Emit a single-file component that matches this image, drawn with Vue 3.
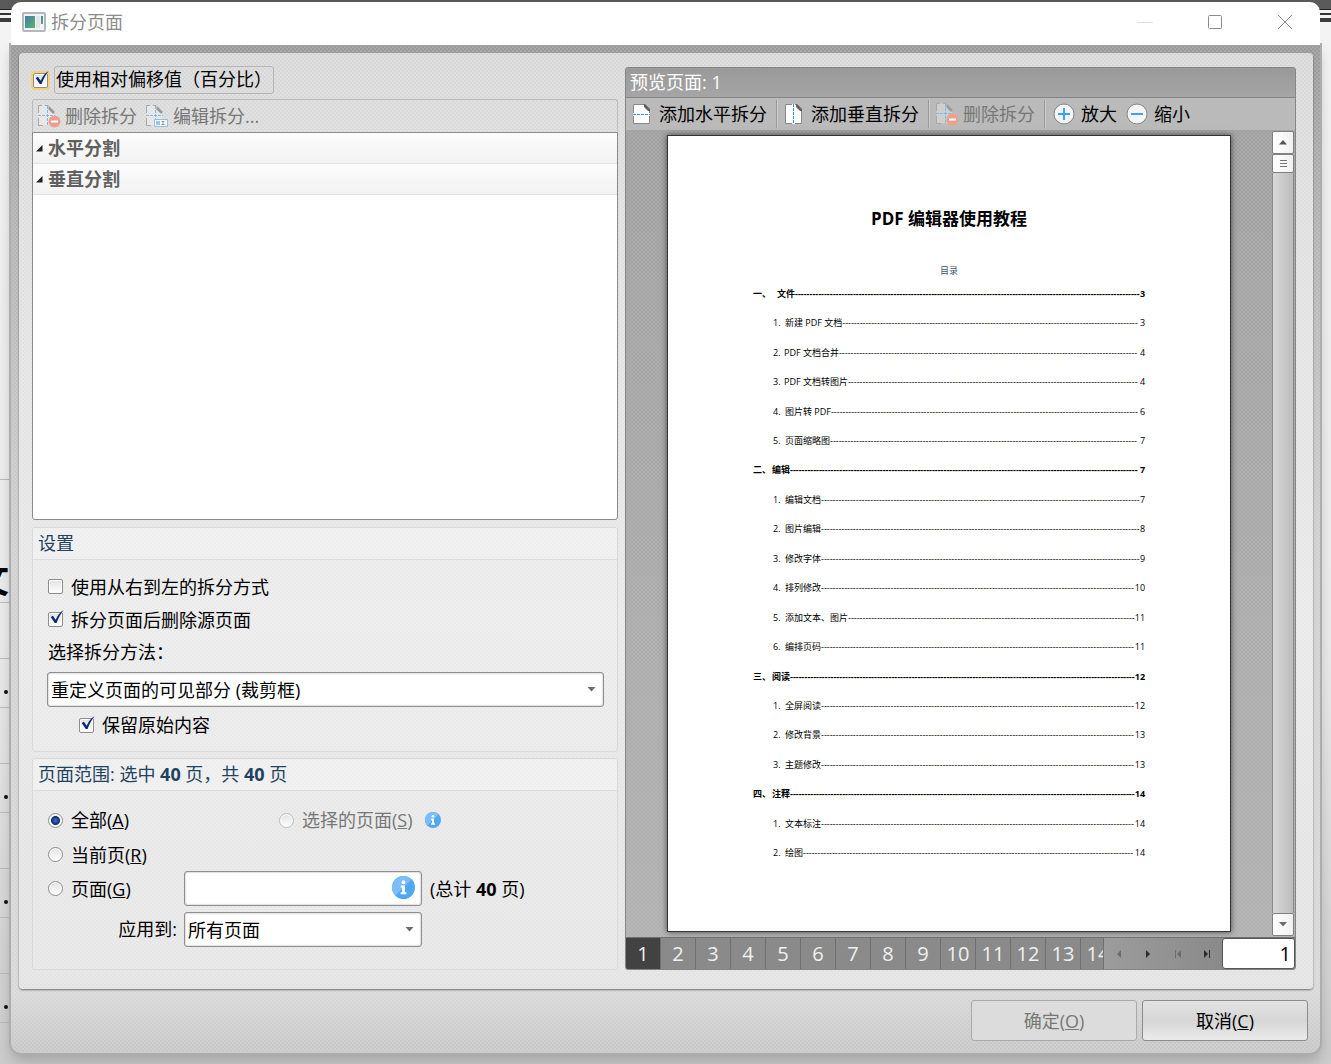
<script setup>
import { ref } from 'vue'

const relative = ref(true)
const rtl = ref(false)
const removeSource = ref(true)
const keepContent = ref(true)
const range = ref('all')
const current = ref(1)
const tabs = Array.from({ length: 14 }, (_, i) => i + 1)
// d: number of hyphens in the leader between entry and page number
const toc = [
  { n: '一、', t: '文件', p: 3, d: 119, head: true, wide: true },
  { n: '1.', t: '新建 PDF 文档', p: 3, d: 102 },
  { n: '2.', t: 'PDF 文档合并', p: 4, d: 103, near: true },
  { n: '3.', t: 'PDF 文档转图片', p: 4, d: 100, near: true },
  { n: '4.', t: '图片转 PDF', p: 6, d: 106 },
  { n: '5.', t: '页面缩略图', p: 7, d: 106 },
  { n: '二、', t: '编辑', p: 7, d: 120, head: true },
  { n: '1.', t: '编辑文档', p: 7, d: 110 },
  { n: '2.', t: '图片编辑', p: 8, d: 110 },
  { n: '3.', t: '修改字体', p: 9, d: 110 },
  { n: '4.', t: '排列修改', p: 10, d: 108 },
  { n: '5.', t: '添加文本、图片', p: 11, d: 99 },
  { n: '6.', t: '编排页码', p: 11, d: 108 },
  { n: '三、', t: '阅读', p: 12, d: 119, head: true },
  { n: '1.', t: '全屏阅读', p: 12, d: 108 },
  { n: '2.', t: '修改背景', p: 13, d: 108 },
  { n: '3.', t: '主题修改', p: 13, d: 108 },
  { n: '四、', t: '注释', p: 14, d: 119, head: true },
  { n: '1.', t: '文本标注', p: 14, d: 108 },
  { n: '2.', t: '绘图', p: 14, d: 114 }
]
</script>

<template>
  <div class="desktop">
    <svg class="symbols" aria-hidden="true">
      <defs>
        <linearGradient id="g-app" x1="0" y1="0" x2="1" y2="1">
          <stop offset="0" stop-color="#3e7fae" /><stop offset="1" stop-color="#5fb16c" />
        </linearGradient>
        <symbol id="i-split-dim" viewBox="0 0 24 24">
          <path d="M1.500 1.500h10l6 6v14h-16z" fill="#fff" fill-opacity=".3" />
          <path d="M5 1.500H1.500V9M1.500 14V21.500H6M8 1.500h3" fill="none" stroke="#a8a8a8" />
          <path d="M11.500 1.500l6 6v2h-2l-4-4z" fill="#999" />
          <path d="M1 11.500h17M10.500 2v20" fill="none" stroke="#7fb8e2" stroke-dasharray="3 1" />
        </symbol>
        <symbol id="i-delete" viewBox="0 0 24 24">
          <use href="#i-split-dim" />
          <circle cx="17.500" cy="17.500" r="6" fill="#eba08d" />
          <path d="M14 17.500h7" stroke="#fff" stroke-width="2" />
        </symbol>
        <symbol id="i-edit" viewBox="0 0 24 24">
          <use href="#i-split-dim" />
          <path d="M9.500 15.500h13v7h-13z" fill="#f4f8fb" stroke="#8fbfe2" />
          <path d="M11 17h4v4h-4z" fill="#9ac7e8" />
          <path d="M16.500 17.500h3M18 17.500v3M16.500 20.500h3" stroke="#999" fill="none" />
        </symbol>
        <symbol id="i-sheet" viewBox="0 0 24 24">
          <path d="M2.500 2.500h11l5 5v14h-16z" fill="#fff" stroke="#888" />
          <path d="M13 2h1l5 5v2h-2l-4-4z" fill="#606060" />
        </symbol>
        <symbol id="i-info" viewBox="0 0 24 24">
          <circle cx="12" cy="12" r="12" fill="#4fa9f2" />
          <path d="M3.500 20.500A12 12 0 0 1 20.500 3.500z" fill="#7cbdf7" />
          <circle cx="12" cy="6.500" r="2" fill="#fff" />
          <path d="M9 10h4.500v7h1.500v2H9v-2h1.500v-5H9z" fill="#fff" />
        </symbol>
        <symbol id="i-check" viewBox="0 0 20 20">
          <path d="M3 9l2.500-1.500 3 4.500C10.500 7 13.500 3.500 17.500 1c-3.500 4-5.500 8-8 14.500H7.500z" fill="#0b2a73" />
        </symbol>
        <symbol id="i-arrow" viewBox="0 0 8 5">
          <path d="M0 0h8l-4 4.500z" fill="#6c6c6c" />
        </symbol>
      </defs>
    </svg>

    <div class="behind" aria-hidden="true">
      <div class="cell c1"></div>
      <div class="cell c2">文</div>
      <div class="cell c3"></div>
      <template v-for="i in 4" :key="i">
        <div class="cell c4"><i></i></div>
        <div class="cell c3"></div>
      </template>
    </div>

    <main class="dialog">
      <header class="titlebar">
        <svg class="appicon" viewBox="0 0 24 20">
          <rect x="1" y="1" width="22" height="18" rx="1" fill="#f1f3f5" stroke="#b2b8bd" stroke-width="2" />
          <rect x="3" y="4" width="10" height="12" fill="url(#g-app)" />
          <rect x="14" y="4" width="4" height="12" fill="#e2e4e6" />
          <rect x="19" y="4" width="2" height="8" fill="url(#g-app)" />
        </svg>
        <h1>拆分页面</h1>
        <button class="winbtn" aria-label="最小化"><svg viewBox="0 0 16 16"><path d="M0 8.500h16" stroke="#ddd" /></svg></button>
        <button class="winbtn" aria-label="最大化"><svg viewBox="0 0 16 16"><rect x="1.500" y="1.500" width="13" height="13" rx="1" fill="none" stroke="#8c8c8c" /></svg></button>
        <button class="winbtn" aria-label="关闭"><svg viewBox="0 0 16 16"><path d="M1 1l14 14M15 1L1 15" stroke="#8c8c8c" /></svg></button>
      </header>

      <div class="body">
        <div class="panel">
          <section class="left">
            <label class="check focus">
              <span class="box"><input v-model="relative" type="checkbox"><svg v-if="relative"><use href="#i-check" /></svg></span>
              <span class="focus-text">使用相对偏移值（百分比）</span>
            </label>
            <div class="tools left-tools">
              <button class="tool" disabled><svg><use href="#i-delete" /></svg>删除拆分</button>
              <button class="tool" disabled><svg><use href="#i-edit" /></svg>编辑拆分...</button>
            </div>
            <div class="tree">
              <button class="node"><svg viewBox="0 0 7 7"><path d="M6.500 0v6.500H0z" fill="#222" /></svg>水平分割</button>
              <button class="node"><svg viewBox="0 0 7 7"><path d="M6.500 0v6.500H0z" fill="#222" /></svg>垂直分割</button>
            </div>

            <section class="group">
              <h2>设置</h2>
              <div class="settings">
                <label class="check"><span class="box"><input v-model="rtl" type="checkbox"><svg v-if="rtl"><use href="#i-check" /></svg></span>使用从右到左的拆分方式</label>
                <label class="check"><span class="box"><input v-model="removeSource" type="checkbox"><svg v-if="removeSource"><use href="#i-check" /></svg></span>拆分页面后删除源页面</label>
                <label class="caption" for="method">选择拆分方法：</label>
                <div class="select">
                  <select id="method"><option>重定义页面的可见部分 (裁剪框)</option></select>
                  <svg><use href="#i-arrow" /></svg>
                </div>
                <label class="check nested"><span class="box"><input v-model="keepContent" type="checkbox"><svg v-if="keepContent"><use href="#i-check" /></svg></span>保留原始内容</label>
              </div>
            </section>

            <section class="group last">
              <h2>页面范围: 选中 <b>40</b> 页，共 <b>40</b> 页</h2>
              <div class="range">
                <label class="check"><input v-model="range" type="radio" name="range" value="all"><span>全部(<u>A</u>)</span></label>
                <div class="selected">
                  <label class="check off"><input v-model="range" type="radio" name="range" value="sel" disabled><span>选择的页面(<u>S</u>)</span></label>
                  <svg class="info"><use href="#i-info" /></svg>
                </div>
                <label class="check cur"><input v-model="range" type="radio" name="range" value="cur"><span>当前页(<u>R</u>)</span></label>
                <label class="check"><input v-model="range" type="radio" name="range" value="pages"><span>页面(<u>G</u>)</span></label>
                <div class="line">
                  <div class="field"><input type="text" aria-label="页面"><svg><use href="#i-info" /></svg></div>
                  <span>(总计 <b>40</b> 页)</span>
                </div>
                <label class="apply" for="apply">应用到:</label>
                <div class="line bottom">
                  <div class="select narrow">
                    <select id="apply"><option>所有页面</option></select>
                    <svg><use href="#i-arrow" /></svg>
                  </div>
                </div>
              </div>
            </section>
          </section>

          <section class="preview">
            <h2>预览页面: 1</h2>
            <div class="tools">
              <button class="tool"><svg viewBox="0 0 24 24"><use href="#i-sheet" /><rect x="2" y="11" width="17" height="3" fill="#fff" /><path d="M2 12.500h17" stroke="#2196f3" stroke-dasharray="3 1" /></svg>添加水平拆分</button>
              <hr>
              <button class="tool"><svg viewBox="0 0 24 24"><use href="#i-sheet" /><rect x="9" y="2" width="3" height="20" fill="#fff" /><path d="M10.500 2v20" stroke="#2196f3" stroke-dasharray="3 1" /></svg>添加垂直拆分</button>
              <hr>
              <button class="tool" disabled><svg><use href="#i-delete" /></svg>删除拆分</button>
              <hr>
              <button class="tool tight"><svg viewBox="0 0 24 24"><circle cx="12" cy="12" r="10" fill="#f4f4f4" stroke="#858585" /><path d="M6 12h12M12 6v12" stroke="#3ba3f0" stroke-width="2" /></svg>放大</button>
              <button class="tool tight"><svg viewBox="0 0 24 24"><circle cx="12" cy="12" r="10" fill="#f4f4f4" stroke="#858585" /><path d="M6 12h12" stroke="#3ba3f0" stroke-width="2" /></svg>缩小</button>
            </div>
            <div class="stage">
              <div class="canvas">
                <article class="sheet">
                  <h3>PDF 编辑器使用教程</h3>
                  <p>目录</p>
                  <ol>
                    <li v-for="(r, i) in toc" :key="i" :class="{ head: r.head, wide: r.wide, near: r.near }">
                      <span class="num">{{ r.n }}</span><span>{{ r.t }}</span><span class="leader">{{ '-'.repeat(r.d) }}</span><span>{{ r.p }}</span>
                    </li>
                  </ol>
                </article>
              </div>
              <div class="scroll">
                <button aria-label="向上"><svg viewBox="0 0 8 5"><path d="M0 4.500h8L4 0z" fill="#555" /></svg></button>
                <div class="thumb"><svg viewBox="0 0 7 7"><path d="M0 .5h7M0 3.500h7M0 6.500h7" stroke="#777" /></svg></div>
                <div class="track"></div>
                <button aria-label="向下"><svg><use href="#i-arrow" /></svg></button>
              </div>
            </div>
            <footer class="pager">
              <div class="tabs">
                <button v-for="n in tabs" :key="n" :class="{ on: n === current }" @click="current = n">{{ n }}</button>
              </div>
              <nav>
                <button disabled aria-label="上一页"><svg viewBox="0 0 8 8"><path d="M6 0v8L2 4z" /></svg></button>
                <button aria-label="下一页"><svg viewBox="0 0 8 8"><path d="M2 0v8l4-4z" /></svg></button>
                <button disabled aria-label="第一页"><svg viewBox="0 0 8 8"><path d="M7 0v8L3 4zM1 0h1v8H1z" /></svg></button>
                <button aria-label="最后一页"><svg viewBox="0 0 8 8"><path d="M1 0v8l4-4zM6 0h1v8H6z" /></svg></button>
              </nav>
              <input v-model="current" type="text" aria-label="页码">
            </footer>
          </section>
        </div>
        <footer class="actions">
          <button disabled>确定(<u>O</u>)</button>
          <button>取消(<u>C</u>)</button>
        </footer>
      </div>
    </main>
  </div>
</template>

<style>
body {
  font-family: "Open Sans", "Noto Sans CJK SC", sans-serif;
}
</style>

<style scoped>
* {
  box-sizing: border-box;
}
.desktop {
  display: grid;
  grid-template-columns: 9px minmax(0, 1fr);
  min-height: 100vh;
  font-size: 18px;
  line-height: 24px;
  color: #000;
  background: linear-gradient(#5a5a5a 0 9px, #222 9px 10px, #f2f2f2 10px 13px, #333 13px 15px, #f2f2f2 15px 18px, #3a3a3a 18px 22px, #f3f3f3 22px, #ebebeb 60%, #cbcbcb);
}
h1, h2, h3, p, ol {
  margin: 0;
  padding: 0;
  font-weight: 400;
  font-size: inherit;
}
button, input, select {
  font: inherit;
  color: inherit;
  margin: 0;
}
button {
  padding: 0;
  border: 0;
  background: none;
}
.symbols {
  position: absolute;
  width: 0;
  height: 0;
}
.behind {
  display: flex;
  flex-direction: column;
  overflow: hidden;
}
.cell {
  flex: none;
  display: flex;
  justify-content: flex-end;
  align-items: center;
  border-bottom: 1px solid #bbb;
}
.c1 { height: 480px; }
.c2 {
  height: 123px;
  padding-top: 78px;
  font-size: 36px;
  font-weight: 700;
}
.c3 { height: 56px; }
.c4 { height: 49px; }
.cell:last-child {
  flex: 1;
  height: auto;
  border: 0;
}
.c4 i {
  width: 4px;
  height: 4px;
  margin: 18px 1px 0 0;
  border-radius: 2px;
  background: #111;
}
.dialog {
  display: flex;
  flex-direction: column;
  margin: 2px 11px 11px 2px;
}
.titlebar {
  position: relative;
  display: flex;
  align-items: center;
  height: 43px;
  padding: 0 0 3px 11px;
  border-radius: 10px 10px 0 0;
  background: #fff;
  color: #8c8c8c;
}
.titlebar h1 {
  flex: 1;
  padding-left: 5px;
}
.appicon {
  width: 24px;
  height: 20px;
}
.winbtn {
  display: flex;
  justify-content: center;
  align-items: center;
  width: 70px;
  height: 100%;
}
.winbtn svg {
  width: 16px;
  height: 16px;
}
.body {
  flex: 1;
  display: flex;
  flex-direction: column;
  padding: 8px 7px 12px 8px;
  border-radius: 0 0 10px 10px;
  box-shadow: 0 0 0 2px #adadad, 0 8px 14px rgba(0, 0, 0, .2);
  background:
    radial-gradient(circle, rgba(255, 255, 255, .14) 1px, transparent 1px) 0 0 / 4px 4px,
    radial-gradient(circle, rgba(255, 255, 255, .14) 1px, transparent 1px) 2px 2px / 4px 4px,
    linear-gradient(#999, #b0b0b0 15%, #d0d0d0 50%, #d8d8d8 94%, #c6c6c6);
}
.panel {
  flex: 1;
  display: grid;
  grid-template-columns: minmax(0, 586fr) minmax(0, 671fr);
  gap: 7px;
  padding: 13px 17px 19px 13px;
  border-radius: 4px;
  box-shadow: 0 1px 2px rgba(0, 0, 0, .5);
  background:
    radial-gradient(circle, rgba(255, 255, 255, .2) 1px, transparent 1px) 0 0 / 4px 4px,
    radial-gradient(circle, rgba(255, 255, 255, .2) 1px, transparent 1px) 2px 2px / 4px 4px,
    linear-gradient(#d6d6d6, #dedede 15%, #e8e8e8 60%, #e2e2e2);
}
.left {
  display: flex;
  flex-direction: column;
}
.check {
  display: flex;
  align-items: center;
  gap: 8px;
  height: 33px;
}
.check.focus {
  height: 28px;
  gap: 6px;
  padding-left: 1px;
}
.focus-text {
  width: 220px;
  height: 28px;
  padding: 0 1px;
  border: 1px solid #b6b6b6;
  border-radius: 3px;
  white-space: nowrap;
}
.box {
  position: relative;
  display: flex;
}
.box svg {
  position: absolute;
  left: 0;
  top: -3px;
  width: 18px;
  height: 18px;
}
.check input {
  appearance: none;
  width: 15px;
  height: 15px;
  border: 1px solid #8d8d8d;
  border-radius: 2px;
  background: linear-gradient(#e2e2e2, #fff);
  box-shadow: inset 0 0 0 1px #fff;
}
.check input[type="radio"] {
  border-radius: 8px;
}
.check input[type="radio"]:checked {
  background: radial-gradient(circle, #3563b8 1px, #0b2a73 4px, #f2f2f2 5px);
}
.check.focus input {
  box-shadow: inset 0 0 0 1px #fff, 0 0 0 2px #f2d27c;
}
.check.off {
  color: #777;
}
.check.off input {
  border-color: #bbb;
}
.tools {
  display: flex;
  align-items: center;
}
.left-tools {
  height: 33px;
  margin-top: 5px;
  border: 1px solid #bcbcbc;
  border-bottom: 0;
  border-radius: 3px 3px 0 0;
}
.tool {
  display: flex;
  align-items: center;
  gap: 4px;
  padding: 0 9px 0 5px;
  white-space: nowrap;
}
.left-tools .tool {
  padding: 0 4px 0 4px;
}
.tool:disabled {
  color: #777;
}
.tool svg {
  width: 24px;
  height: 24px;
}
.tool.tight {
  gap: 5px;
  padding: 0 2px 0 6px;
}
.tree {
  flex: 1;
  border: 1px solid #8a8a8a;
  border-radius: 0 0 3px 3px;
  background: #fff;
}
.node {
  display: flex;
  align-items: center;
  gap: 5px;
  width: 100%;
  height: 31px;
  padding-left: 3px;
  border-bottom: 1px solid #e2e2e2;
  background: linear-gradient(#fcfcfc, #f2f2f2);
  font-weight: 700;
  color: #606060;
}
.node svg {
  width: 7px;
  height: 7px;
}
.group {
  margin-top: 7px;
  border: 1px solid #dadada;
  border-radius: 3px;
  background: rgba(255, 255, 255, .12);
}
.group.last {
  margin-top: 6px;
}
.group h2 {
  height: 32px;
  padding: 3px 5px;
  border-bottom: 1px solid #dcdcdc;
  background: rgba(255, 255, 255, .25);
  color: #1f4260;
}
.settings {
  padding: 10px 13px 8px 14px;
}
.settings .check {
  padding-left: 1px;
}
.settings .nested {
  height: 36px;
  padding-left: 32px;
}
.caption {
  display: block;
  height: 36px;
  padding-left: 1px;
  line-height: 33px;
}
.select {
  position: relative;
}
.select svg {
  position: absolute;
  right: 8px;
  top: 15px;
  width: 9px;
  height: 5px;
}
select, .field input {
  display: block;
  appearance: none;
  width: 100%;
  height: 35px;
  padding: 0 3px;
  border: 1px solid #8f8f8f;
  border-radius: 3px;
  background: #fff;
  box-shadow: inset 0 0 2px #999;
}
.range {
  display: grid;
  grid-template-columns: 136px minmax(0, 1fr);
  grid-template-rows: 36px 33px 35px 41px;
  padding: 11px 13px 22px 15px;
}
.range .check {
  height: auto;
}
.cur {
  grid-column: 1 / 3;
}
.selected {
  display: flex;
  align-items: center;
  gap: 12px;
  padding-left: 95px;
}
.info {
  width: 16px;
  height: 16px;
}
.line {
  display: flex;
  align-items: center;
  gap: 8px;
}
.line.bottom {
  align-items: flex-end;
}
.field, .narrow {
  position: relative;
  width: 238px;
}
.field svg {
  position: absolute;
  right: 7px;
  top: 5px;
  width: 23px;
  height: 23px;
}
.apply {
  align-self: end;
  padding-right: 7px;
  line-height: 35px;
  text-align: right;
}
.preview {
  display: flex;
  flex-direction: column;
  margin-top: 1px;
  border: 1px solid #858585;
  border-radius: 3px;
  overflow: hidden;
  background: #a9a9a9;
}
.preview h2 {
  height: 30px;
  padding: 2px 4px;
  background: linear-gradient(#999, #a5a5a5);
  border-bottom: 1px solid #858585;
  color: #fff;
}
.preview .tools {
  height: 32px;
  background: #bababa;
}
hr {
  width: 2px;
  height: 28px;
  margin: 0;
  border: 0;
  border-left: 1px solid #999;
  background: #ccc;
}
.stage {
  flex: 1;
  display: flex;
  background:
    radial-gradient(circle, rgba(255, 255, 255, .1) 1px, transparent 1px) 0 0 / 4px 4px,
    radial-gradient(circle, rgba(255, 255, 255, .1) 1px, transparent 1px) 2px 2px / 4px 4px,
    linear-gradient(#a0a0a0, #b0b0b0);
}
.canvas {
  flex: 1;
  min-width: 0;
  padding: 5px 41px;
}
.sheet {
  height: 797px;
  padding: 71px 84px 0;
  border: 1px solid #333;
  background: #fff;
  box-shadow: 0 0 6px rgba(0, 0, 0, .6);
}
.sheet h3 {
  text-align: center;
  font-size: 17px;
  font-weight: 700;
}
.sheet p {
  margin-top: 28px;
  text-align: center;
  font-size: 9px;
  color: #35566e;
}
.sheet ol {
  display: grid;
  grid-auto-rows: 1fr;
  height: 589px;
  margin-top: -4px;
  list-style: none;
  font-size: 9px;
}
.sheet li {
  display: flex;
  align-items: center;
  padding: 0 1px 0 21px;
  white-space: nowrap;
}
.sheet .head {
  padding-left: 1px;
  font-weight: 700;
}
.num {
  width: 12px;
}
.near .num {
  width: 11px;
}
.head .num {
  width: 19px;
}
.wide .num {
  width: 24px;
}
.leader {
  flex: 1;
}
.scroll {
  display: flex;
  flex-direction: column;
  width: 23px;
  padding: 1px 1px 1px 0;
}
.scroll button, .thumb {
  display: flex;
  justify-content: center;
  align-items: center;
  height: 23px;
  border: 1px solid #808080;
  border-radius: 2px;
  background: linear-gradient(90deg, #fff, #f0f0f0);
}
.thumb {
  height: 19px;
}
.scroll svg {
  width: 8px;
  height: 5px;
}
.scroll .thumb svg {
  width: 7px;
  height: 7px;
}
.track {
  flex: 1;
  border: solid #8a8a8a;
  border-width: 0 1px;
  background: linear-gradient(90deg, #d8d8d8, #bcbcbc);
}
.pager {
  display: flex;
  height: 32px;
  border-top: 1px solid #707070;
  background: #8a8a8a;
}
.tabs {
  flex: 1;
  display: flex;
  overflow: hidden;
}
.tabs button {
  flex: none;
  width: 35px;
  border-right: 1px solid #707070;
  font-size: 20px;
  color: #f0f0f0;
}
.tabs .on {
  background: #424242;
}
.pager nav {
  display: flex;
  width: 119px;
  border-left: 1px solid #707070;
  background: linear-gradient(90deg, #9c9c9c, #8a8a8a);
}
.pager nav button {
  display: flex;
  flex: 1;
  justify-content: center;
  align-items: center;
}
.pager nav svg {
  width: 8px;
  height: 8px;
  fill: #2c2c2c;
}
.pager nav button:disabled svg {
  fill: #6c6c6c;
}
.pager input {
  width: 73px;
  padding: 0 3px;
  border: 1px solid #555;
  border-radius: 3px;
  background: #fff;
  text-align: right;
  font-size: 20px;
}
.actions {
  display: flex;
  justify-content: flex-end;
  gap: 5px;
  padding: 11px 5px 0 0;
}
.actions button {
  width: 166px;
  height: 41px;
  border: 1px solid #8c8c8c;
  border-radius: 3px;
  background: linear-gradient(#e2e2e2, #d6d6d6 50%, #ebebeb);
}
.actions button:disabled {
  color: #777;
  border-color: #aaa;
  background: #dcdcdc;
}
</style>
